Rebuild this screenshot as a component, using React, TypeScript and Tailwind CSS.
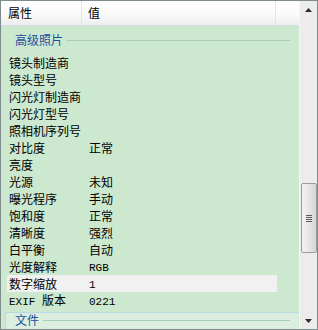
import React from "react";

const rows: [string, string, boolean?][] = [
  ["镜头制造商", ""],
  ["镜头型号", ""],
  ["闪光灯制造商", ""],
  ["闪光灯型号", ""],
  ["照相机序列号", ""],
  ["对比度", "正常"],
  ["亮度", ""],
  ["光源", "未知"],
  ["曝光程序", "手动"],
  ["饱和度", "正常"],
  ["清晰度", "强烈"],
  ["白平衡", "自动"],
  ["光度解释", "RGB"],
  ["数字缩放", "1", true],
  ["EXIF 版本", "0221"],
];

const cjk = "font-['Noto_Sans_CJK_SC',sans-serif]";
const mono = "font-['Liberation_Mono','Noto_Sans_CJK_SC',monospace]";

// 英数字はSimSun風に等幅で表示する
const Cell = ({ text }: { text: string }) => {
  const parts = text.split(/([A-Za-z0-9 ]+)/).filter(Boolean);
  return (
    <>
      {parts.map((p, i) =>
        /^[A-Za-z0-9 ]+$/.test(p) ? (
          <span key={i} className={`${mono} text-[11px] whitespace-pre`}>
            {p}
          </span>
        ) : (
          <span key={i}>{p}</span>
        )
      )}
    </>
  );
};

const SectionHeader = ({ title }: { title: string }) => (
  <div className="flex items-center h-[28px] pl-[14px] pr-[9px]">
    <span className="text-[#1f4e9c] text-[12px] leading-none">{title}</span>
    <div className="flex-1 h-px bg-[#a8ccb9] ml-[4px]" />
  </div>
);

const ScrollBar = () => (
  <div className="w-[18px] bg-[#ececec] border-l border-[#f6f6f6] flex flex-col items-center">
    <div className="h-[17px] flex items-center justify-center">
      <svg width="7" height="4" viewBox="0 0 7 4">
        <path d="M3.5 0 L7 4 L0 4 Z" fill="#2c2c2c" />
      </svg>
    </div>
    <div className="mt-[165px] w-[16px] h-[70px] rounded-[2px] border border-[#9b9b9b] bg-gradient-to-r from-[#f3f3f3] via-[#e6e6e6] to-[#d6d6d6] flex flex-col items-center justify-center gap-[1px]">
      {[0, 1, 2, 3].map((i) => (
        <div key={i} className="w-[6px] h-px bg-[#5a5a5a]" />
      ))}
    </div>
    <div className="flex-1" />
    <div className="h-[17px] flex items-center justify-center">
      <svg width="7" height="4" viewBox="0 0 7 4">
        <path d="M0 0 L7 0 L3.5 4 Z" fill="#2c2c2c" />
      </svg>
    </div>
  </div>
);

export default function App() {
  return (
    <div
      className={`w-[318px] h-[330px] border border-[#7f8a8c] flex overflow-hidden text-black ${cjk}`}
    >
      <div className="flex-1 flex flex-col min-w-0">
        <div className="h-[25px] flex border-b border-[#d6dde2] bg-gradient-to-b from-white via-[#fbfbfb] to-[#eeeef0] text-[12px]">
          <div className="w-[81px] border-r border-[#e2e4e6] flex items-center pl-[7px]">
            属性
          </div>
          <div className="w-[194px] border-r border-[#e2e4e6] flex items-center pl-[6px]">
            值
          </div>
          <div className="flex-1" />
        </div>
        <div className="flex-1 bg-[#cce8cf] flex flex-col text-[12px]">
          <SectionHeader title="高级照片" />
          {rows.map(([k, v, sel]) => (
            <div
              key={k}
              className={`h-[17px] flex items-center ml-[6px] w-[270px] ${
                sel ? "bg-[#f0f1f0]" : ""
              }`}
            >
              <div className="w-[81px] pl-[2px] whitespace-nowrap leading-none">
                <Cell text={k} />
              </div>
              <div className="flex-1 pl-[1px] leading-none">
                <Cell text={v} />
              </div>
            </div>
          ))}
          <div className="mt-[3px] ml-[4px] mr-[1px] flex-1 bg-[#dbeee0] border-t border-l border-[#b9d9e4] rounded-tl-[2px]">
            <div className="flex items-center h-[14px] pl-[9px] pr-[8px]">
              <span className="text-[#1f4e9c] text-[12px] leading-none">文件</span>
              <div className="flex-1 h-px bg-[#a8ccb9] ml-[4px]" />
            </div>
          </div>
        </div>
      </div>
      <ScrollBar />
    </div>
  );
}
